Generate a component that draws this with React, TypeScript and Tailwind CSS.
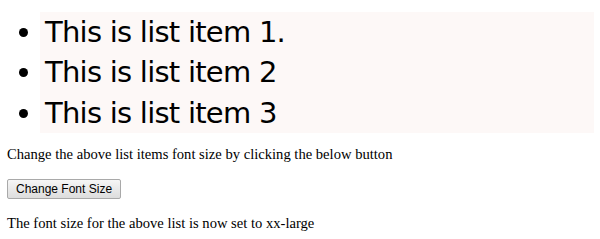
import React from "react";

const items = ["This is list item 1.", "This is list item 2", "This is list item 3"];

export default function App() {
    return (
        <div className="w-[600px] h-[239px] bg-white px-[7px] pt-[12px] text-black font-['Liberation_Serif',serif]">
            <ul className="mr-[-1px] list-disc font-['DejaVu_Sans',sans-serif] text-[29px] leading-[40.4px] tracking-[-0.75px]">
                {items.map((item) => (
                    <li key={item} className="ml-[37px]">
                        <div className="-ml-[4px] pl-[5px] bg-[#fdf8f7]">{item}</div>
                    </li>
                ))}
            </ul>
            <p className="mt-[13px] text-[14.6px] leading-[17px]">
                Change the above list items font size by clicking the below button
            </p>
            <button className="mt-[16px] h-[20px] px-[8px] rounded-[2px] border border-[#a9a9a9] bg-gradient-to-b from-[#f6f6f6] to-[#dddddd] font-['Liberation_Sans',sans-serif] text-[12px] leading-[18px] text-black">
                Change Font Size
            </button>
            <p className="mt-[15px] text-[14.6px] leading-[17px]">
                The font size for the above list is now set to xx-large
            </p>
        </div>
    );
}
